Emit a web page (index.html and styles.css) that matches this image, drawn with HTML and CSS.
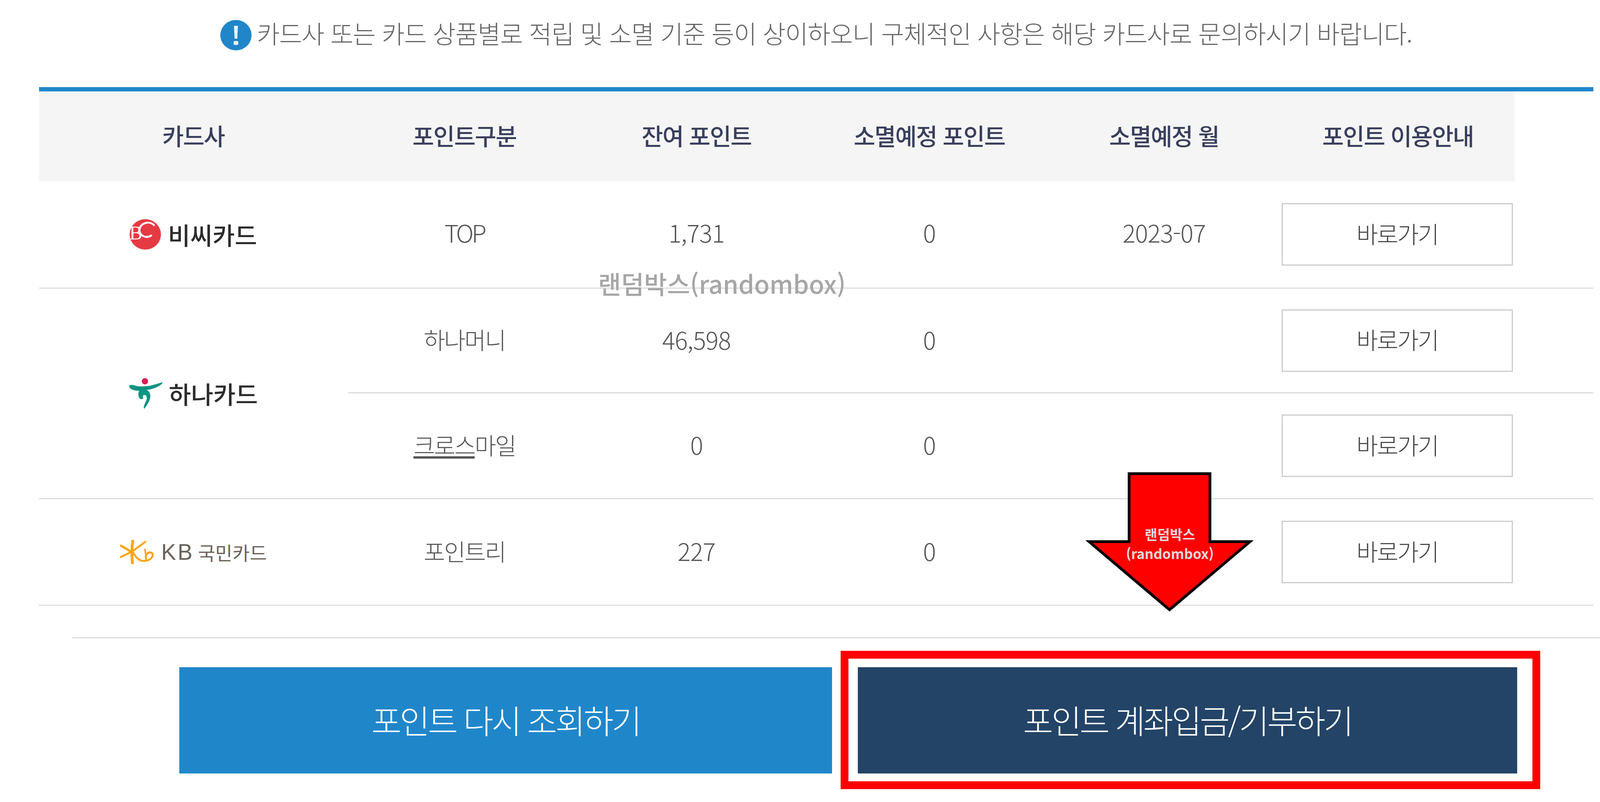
FILE: index.html
```html
<!DOCTYPE html>
<html lang="ko">
<head>
<meta charset="utf-8">
<title>포인트 조회</title>
<link rel="stylesheet" href="styles.css">
</head>
<body>
<main class="page">
  <p class="notice">
    <svg class="notice-icon" viewBox="0 0 80 78" aria-hidden="true">
      <ellipse cx="40" cy="39" rx="40" ry="39" fill="#2086c9"/>
      <path d="M35 15h10l-1.500 33h-7z" fill="#e8f3fa"/>
      <rect x="34" y="54" width="12" height="10" rx="3" fill="#e8f3fa"/>
    </svg>
    <span>카드사 또는 카드 상품별로 적립 및 소멸 기준 등이 상이하오니 구체적인 사항은 해당 카드사로 문의하시기 바랍니다.</span>
  </p>

  <table class="points">
    <colgroup>
      <col class="c1"><col class="c2"><col class="c3"><col class="c4"><col class="c5"><col class="c6"><col class="c7">
    </colgroup>
    <thead>
      <tr class="head">
        <th>카드사</th><th>포인트구분</th><th>잔여 포인트</th><th>소멸예정 포인트</th><th>소멸예정 월</th><th>포인트 이용안내</th><td class="spare-head"></td>
      </tr>
    </thead>
    <tbody>
      <tr class="r1">
        <td>
          <div class="logo">
            <svg class="mark-bc" viewBox="0 0 80 78" aria-hidden="true">
              <ellipse cx="40" cy="39" rx="40" ry="39" fill="#e63a43"/>
              <text x="-1" y="52" class="bc-b">B</text>
              <path d="M62 15C50 3 27 10 25 27c-1 14 16 24 30 15" fill="none" stroke="#fff" stroke-width="5" stroke-linecap="round"/>
            </svg>
            <span class="word-bc">비씨카드</span>
          </div>
        </td>
        <td class="num latin">TOP</td><td class="num">1,731</td><td class="num">0</td><td class="num">2023-07</td>
        <td><a class="go" href="#">바로가기</a></td><td></td>
      </tr>
      <tr class="r2">
        <td rowspan="2">
          <div class="logo">
            <svg class="mark-hana" viewBox="0 0 88 80" aria-hidden="true">
              <circle cx="41" cy="9" r="8" fill="#e5194f"/>
              <path d="M1 20c3-3 10-2 18 1 14 3 36 0 48-4 7-2 14-4 20-6l-3 5c-8 7-22 13-36 15-14 3-32 4-42-2-4-2-6-6-5-9z" fill="#0d9482"/>
              <path d="M29 30c12-3 25 2 26 15 1 11-8 24-15 34l-2-1c0-8 4-14 7-21 2-6 0-14-6-13-3 0-5 5-2 9-3 3-9 2-11-2-3-7-2-17 3-21z" fill="#0d9482"/>
            </svg>
            <span class="word-hana">하나카드</span>
          </div>
        </td>
        <td>하나머니</td><td class="num">46,598</td><td class="num">0</td><td></td>
        <td><a class="go" href="#">바로가기</a></td><td></td>
      </tr>
      <tr class="r3">
        <td><u class="mark-under">크로스</u>마일</td><td class="num">0</td><td class="num">0</td><td></td>
        <td><a class="go" href="#">바로가기</a></td><td></td>
      </tr>
      <tr class="r4">
        <td>
          <div class="logo">
            <svg class="mark-kb" viewBox="0 0 88 62" aria-hidden="true">
              <g fill="none" stroke="#f9a51a" stroke-linecap="round" stroke-linejoin="round">
                <path d="M33 2c-3 18-3 38-1 58" stroke-width="7"/>
                <path d="M3 15l30 18" stroke-width="6"/>
                <path d="M65 5L31 30 2 44" stroke-width="5"/>
                <path d="M33 31c6 10 14 24 30 23 14-1 22-10 21-17-1-5-9-7-14-2-4 4-5 9-3 14" stroke-width="5"/>
                <path d="M64 24l3 18" stroke-width="4"/>
              </g>
            </svg>
            <span class="word-kb">KB</span>
            <span class="word-kbcard">국민카드</span>
          </div>
        </td>
        <td>포인트리</td><td class="num">227</td><td class="num">0</td><td></td>
        <td><a class="go" href="#">바로가기</a></td><td></td>
      </tr>
    </tbody>
  </table>

  <hr class="divider">

  <div class="actions">
    <a class="action action-blue" href="#">포인트 다시 조회하기</a>
    <a class="action action-navy" href="#">포인트 계좌입금/기부하기</a>
  </div>

  <div class="watermark">랜덤박스(randombox)</div>
  <div class="frame"></div>
  <div class="arrow">
    <svg viewBox="0 0 450 375" aria-hidden="true">
      <polygon points="120.500,12.500 327.500,12.500 327.500,186.500 430,186.500 224,361 18,186.500 120.500,186.500" fill="#ff0000" stroke="#000" stroke-width="7"/>
    </svg>
    <div class="arrow-label"><span>랜덤박스</span><span>(randombox)</span></div>
  </div>
</main>
</body>
</html>
```
FILE: styles.css
```css
* { box-sizing: border-box; }
html, body { margin: 0; padding: 0; background: #fff; }
body {
  font-family: "Noto Sans CJK KR", "Noto Sans", sans-serif;
  color: #555;
  overflow: hidden;
}
.page { position: relative; width: 4179px; height: 2053px; }

.notice {
  margin: 0;
  height: 223px;
  padding-top: 51px;
  display: flex;
  justify-content: center;
  align-items: flex-start;
  gap: 13px;
  font-size: 64px;
  font-weight: 300;
  letter-spacing: -1.5px;
  line-height: 64px;
  color: #666;
}
.notice-icon { width: 80px; height: 78px; flex: none; }

.points {
  margin-left: 100px;
  width: 3979px;
  table-layout: fixed;
  border-collapse: separate;
  border-spacing: 0;
  border-top: 11px solid #2086c9;
  font-size: 60px;
  font-weight: 300;
  letter-spacing: -3px;
  text-align: center;
}
.c1 { width: 790px; }
.c2 { width: 598px; }
.c3 { width: 590px; }
.c4 { width: 602px; }
.c5 { width: 600px; }
.c6 { width: 597px; }
.c7 { width: 202px; }

.head { height: 230px; }
.head th {
  background: #f5f5f5;
  font-weight: 500;
  letter-spacing: -2px;
  color: #3a3f5c;
  padding: 0 0 8px;
}
.r1 { height: 275px; }
.r2 { height: 268px; }
.r3 { height: 271px; }
.r4 { height: 273px; }
tbody td {
  padding: 0 0 8px;
  border-bottom: 3px solid #ddd;
}
tbody .r1 td { padding-bottom: 12px; }
tbody td:has(.go),
tbody .r1 td:has(.go) { padding-bottom: 0; text-align: left; }
tbody td:has(.logo),
tbody .r1 td:has(.logo) { padding: 0; }
.num { font-size: 62px; letter-spacing: -1px; }
.latin { letter-spacing: -5px; }
.mark-under { text-underline-offset: 4px; }

.logo {
  display: flex;
  justify-content: center;
  align-items: center;
  letter-spacing: 0;
}
.mark-bc { width: 80px; height: 78px; margin-right: 18px; }
.bc-b { font-family: "Liberation Serif", serif; font-size: 50px; fill: #fff; }
.word-bc, .word-hana {
  font-size: 62px;
  line-height: 70px;
  font-weight: 500;
  color: #2c2c2c;
}
.mark-hana { width: 88px; height: 80px; margin-right: 14px; }
.mark-kb { width: 88px; height: 62px; margin-right: 18px; }
.word-kb {
  font-family: "Liberation Sans", sans-serif;
  font-size: 57px;
  line-height: 60px;
  letter-spacing: 4px;
  color: #6b6259;
  margin-right: 10px;
}
.word-kbcard {
  font-size: 48px;
  line-height: 60px;
  font-weight: 400;
  color: #6b6259;
}

.go {
  display: flex;
  justify-content: center;
  align-items: center;
  width: 592px;
  height: 160px;
  margin-left: 1px;
  padding-bottom: 8px;
  border: 3px solid #ccc;
  background: #fff;
  color: #444;
  font-size: 60px;
  text-decoration: none;
}

.divider {
  margin: 80px 0 0 185px;
  width: 3980px;
  height: 3px;
  border: 0;
  background: #ddd;
}

.actions {
  display: flex;
  margin: 74px 0 0 459px;
  gap: 66px;
}
.action {
  display: flex;
  justify-content: center;
  align-items: center;
  height: 272px;
  padding-bottom: 6px;
  color: #fff;
  font-size: 84px;
  letter-spacing: -5px;
  font-weight: 300;
  text-decoration: none;
}
.action-blue { width: 1671px; background: #2086ca; }
.action-navy { width: 1688px; background: #234467; }

.watermark {
  position: absolute;
  left: 1531px;
  top: 684px;
  font-size: 64px;
  line-height: 80px;
  font-weight: 500;
  color: #a6a6a6;
  white-space: nowrap;
}
.frame {
  position: absolute;
  left: 2152px;
  top: 1666px;
  width: 1791px;
  height: 354px;
  border: 20px solid #f00;
}
.arrow {
  position: absolute;
  left: 2770px;
  top: 1200px;
  width: 450px;
  height: 375px;
}
.arrow svg { display: block; width: 450px; height: 375px; }
.arrow-label {
  position: absolute;
  left: 0;
  right: 0;
  top: 142px;
  display: flex;
  flex-direction: column;
  align-items: center;
  font-size: 35px;
  line-height: 49px;
  font-weight: 700;
  color: #dcdcdc;
}
```
